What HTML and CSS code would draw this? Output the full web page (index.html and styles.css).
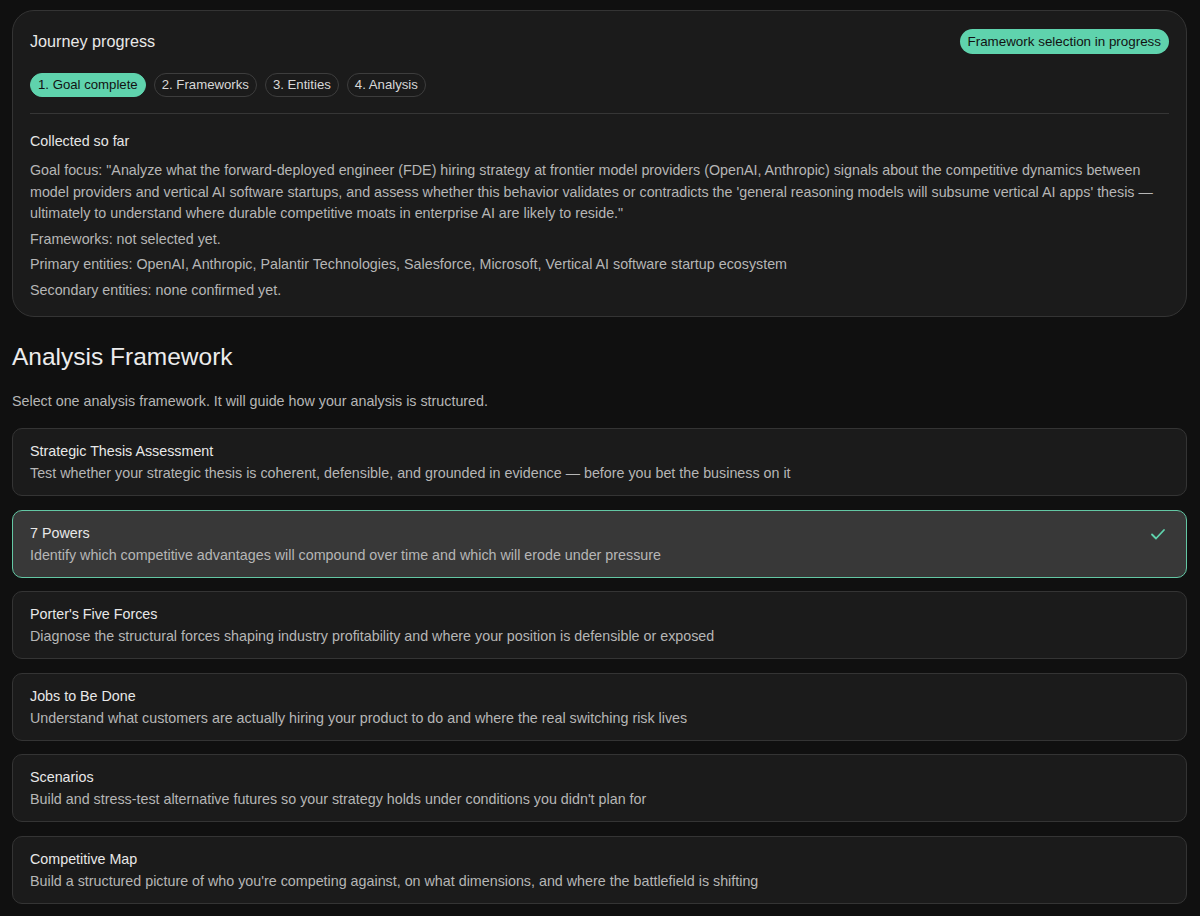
FILE: index.html
```html
<!DOCTYPE html>
<html lang="en">
<head>
    <meta charset="UTF-8">
    <meta name="viewport" content="width=device-width, initial-scale=1.0">
    <title>Analysis Framework</title>
    <link rel="stylesheet" href="styles.css">
</head>
<body>
    <div class="page">
        <section class="journey">
            <div class="journey-head">
                <h2 class="journey-title">Journey progress</h2>
                <span class="status-badge">Framework selection in progress</span>
            </div>

            <div class="steps">
                <span class="step step-done">1. Goal complete</span>
                <span class="step">2. Frameworks</span>
                <span class="step">3. Entities</span>
                <span class="step">4. Analysis</span>
            </div>

            <div class="collected">
                <h3>Collected so far</h3>
                <p>Goal focus: "Analyze what the forward-deployed engineer (FDE) hiring strategy at frontier model providers (OpenAI, Anthropic) signals about the competitive dynamics between model providers and vertical AI software startups, and assess whether this behavior validates or contradicts the 'general reasoning models will subsume vertical AI apps' thesis — ultimately to understand where durable competitive moats in enterprise AI are likely to reside."</p>
                <p>Frameworks: not selected yet.</p>
                <p>Primary entities: OpenAI, Anthropic, Palantir Technologies, Salesforce, Microsoft, Vertical AI software startup ecosystem</p>
                <p>Secondary entities: none confirmed yet.</p>
            </div>
        </section>

        <h1 class="section-title">Analysis Framework</h1>
        <p class="section-lead">Select one analysis framework. It will guide how your analysis is structured.</p>

        <div class="options">
            <div class="option">
                <div class="option-name">Strategic Thesis Assessment</div>
                <div class="option-desc">Test whether your strategic thesis is coherent, defensible, and grounded in evidence — before you bet the business on it</div>
            </div>
            <div class="option selected">
                <div class="option-name">7 Powers</div>
                <div class="option-desc">Identify which competitive advantages will compound over time and which will erode under pressure</div>
                <svg class="check" width="18" height="18" viewBox="0 0 18 18" fill="none">
                    <path d="M3 9.5l4 4 8-8.5" stroke="#5fd3ad" stroke-width="1.8" stroke-linecap="round" stroke-linejoin="round"/>
                </svg>
            </div>
            <div class="option">
                <div class="option-name">Porter's Five Forces</div>
                <div class="option-desc">Diagnose the structural forces shaping industry profitability and where your position is defensible or exposed</div>
            </div>
            <div class="option">
                <div class="option-name">Jobs to Be Done</div>
                <div class="option-desc">Understand what customers are actually hiring your product to do and where the real switching risk lives</div>
            </div>
            <div class="option">
                <div class="option-name">Scenarios</div>
                <div class="option-desc">Build and stress-test alternative futures so your strategy holds under conditions you didn't plan for</div>
            </div>
            <div class="option">
                <div class="option-name">Competitive Map</div>
                <div class="option-desc">Build a structured picture of who you're competing against, on what dimensions, and where the battlefield is shifting</div>
            </div>
        </div>
    </div>
</body>
</html>
```

FILE: styles.css
```css
body {
    margin: 0;
    background-color: #101010;
    color: #e6e6e6;
    font-family: "Liberation Sans", Arial, sans-serif;
}

.page {
    padding: 10px 13px 20px 12px;
}

.journey {
    background-color: #1b1b1b;
    border: 1px solid #343434;
    border-radius: 22px;
    padding: 18px 17px 15px 17px;
}

.journey-head {
    display: flex;
    justify-content: space-between;
    align-items: center;
}

.journey-title {
    margin: 0;
    font-size: 16.2px;
    font-weight: 400;
    color: #e8e8e8;
}

.status-badge {
    background-color: #5fd3ad;
    color: #121212;
    font-size: 13.4px;
    line-height: 25px;
    padding: 0 8px;
    border-radius: 13px;
}

.steps {
    display: flex;
    gap: 8px;
    margin-top: 19px;
    padding-bottom: 16px;
    border-bottom: 1px solid #363636;
}

.step {
    font-size: 13.2px;
    line-height: 22px;
    padding: 0 7px;
    border: 1px solid #3d3d3d;
    border-radius: 12px;
    color: #d8d8d8;
}

.step-done {
    background-color: #5fd3ad;
    border-color: #5fd3ad;
    color: #121212;
}

.collected h3 {
    margin: 17px 0 7.5px 0;
    font-size: 14.3px;
    line-height: 21.5px;
    font-weight: 400;
    color: #e6e6e6;
}

.collected p {
    margin: 0 0 4px 0;
    font-size: 14.3px;
    line-height: 21.5px;
    color: #b6b6b6;
}

.collected p:last-child {
    margin-bottom: 0;
}

.section-title {
    margin: 25px 0 0 0;
    font-size: 24.5px;
    line-height: 30px;
    font-weight: 400;
    color: #ececec;
}

.section-lead {
    margin: 19px 0 17px 0;
    font-size: 14.3px;
    line-height: 20px;
    color: #b6b6b6;
}

.options {
    display: flex;
    flex-direction: column;
    gap: 13.6px;
}

.option {
    position: relative;
    background-color: #1b1b1b;
    border: 1px solid #343434;
    border-radius: 10px;
    padding: 11px 17px 11px 17px;
}

.option.selected {
    background-color: #383838;
    border-color: #63c7a4;
}

.option-name {
    font-size: 14.3px;
    line-height: 22px;
    color: #e8e8e8;
}

.option-desc {
    font-size: 14.3px;
    line-height: 22px;
    color: #b6b6b6;
}

.check {
    position: absolute;
    top: 14px;
    right: 19px;
}
```
